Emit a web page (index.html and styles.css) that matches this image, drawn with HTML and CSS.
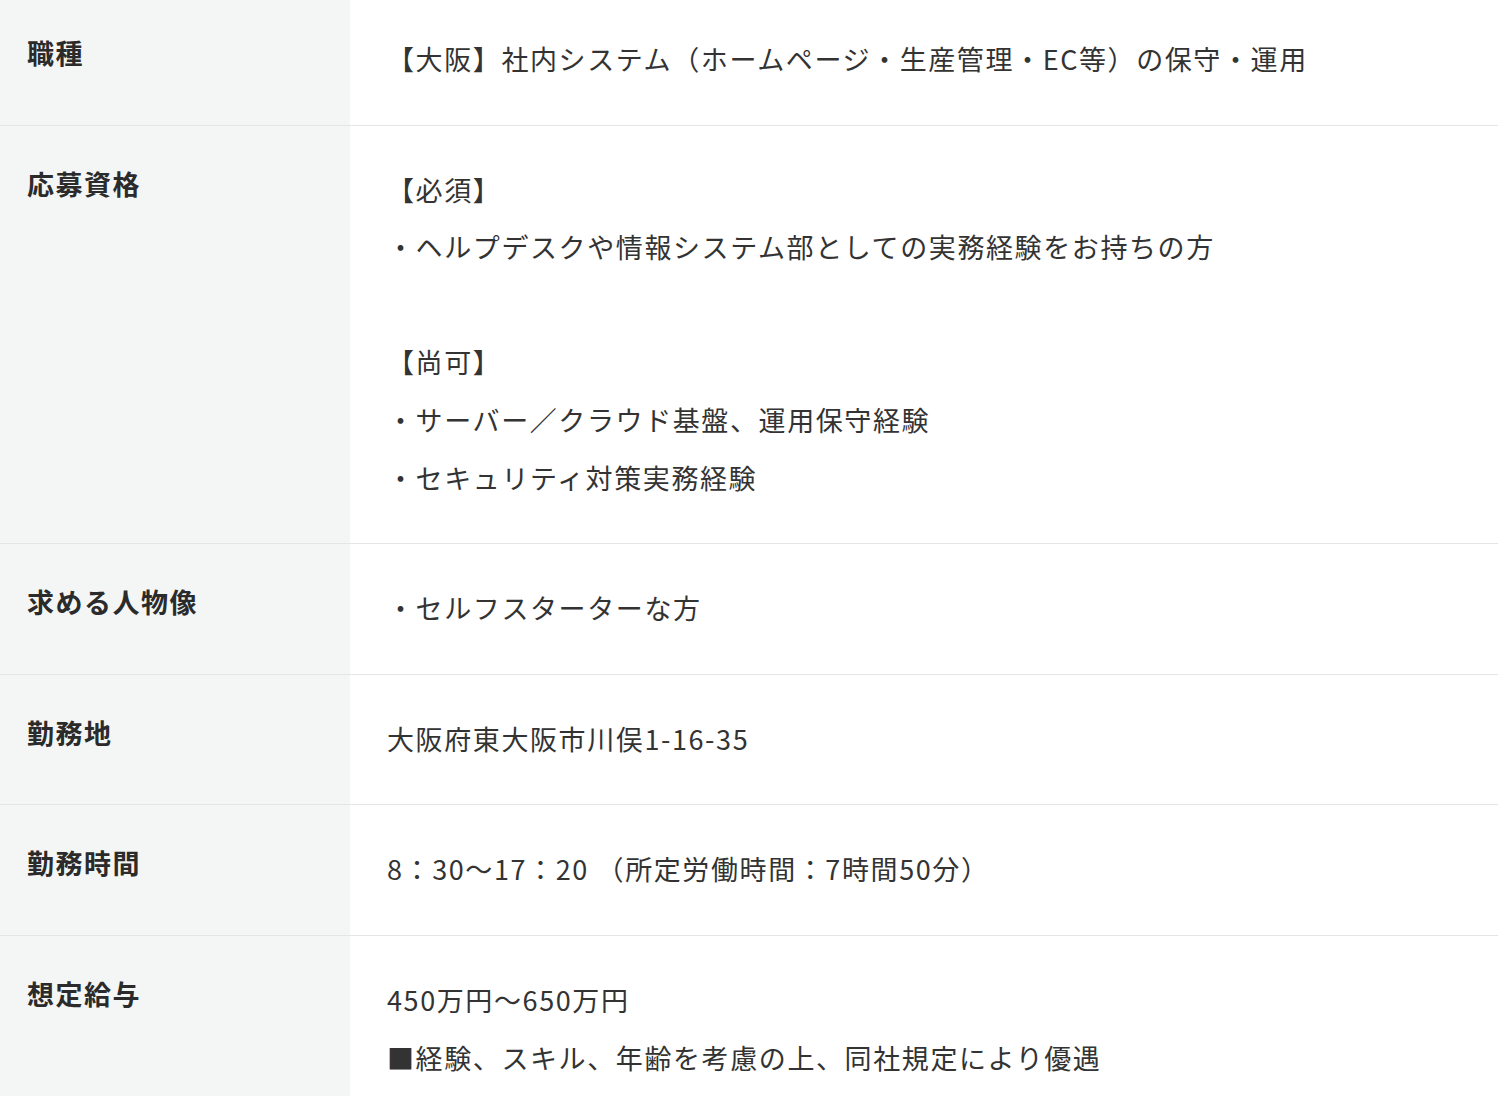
FILE: index.html
```html
<!DOCTYPE html>
<html lang="ja">
<head>
<meta charset="utf-8">
<title>募集要項</title>
<link rel="stylesheet" href="styles.css">
</head>
<body>
<div class="spec">
  <div class="row">
    <div class="label">職種</div>
    <div class="value">【大阪】社内システム（ホームページ・生産管理・EC等）の保守・運用</div>
  </div>
  <div class="row">
    <div class="label">応募資格</div>
    <div class="value">【必須】<br>・ヘルプデスクや情報システム部としての実務経験をお持ちの方<br><br>【尚可】<br>・サーバー／クラウド基盤、運用保守経験<br>・セキュリティ対策実務経験</div>
  </div>
  <div class="row">
    <div class="label">求める人物像</div>
    <div class="value">・セルフスターターな方</div>
  </div>
  <div class="row">
    <div class="label">勤務地</div>
    <div class="value">大阪府東大阪市川俣1-16-35</div>
  </div>
  <div class="row">
    <div class="label">勤務時間</div>
    <div class="value">8：30〜17：20 （所定労働時間：7時間50分）</div>
  </div>
  <div class="row">
    <div class="label">想定給与</div>
    <div class="value">450万円〜650万円<br>■経験、スキル、年齢を考慮の上、同社規定により優遇</div>
  </div>
</div>
</body>
</html>
```

FILE: styles.css
```css
html, body {
  margin: 0;
  padding: 0;
  background: #ffffff;
}

body {
  font-family: "Noto Sans CJK JP", "Noto Sans", sans-serif;
  color: #333333;
}

.spec {
  margin-top: -5px;
}

.row {
  display: grid;
  grid-template-columns: 350px 1fr;
  border-bottom: 1px solid #e5e5e5;
}

.label {
  background: #f4f5f5;
  padding: 35px 20px 0 27px;
  font-size: 27px;
  font-weight: 700;
  line-height: 45px;
  letter-spacing: 1.5px;
  color: #2b2b2b;
}

.value {
  padding: 35px 40px 37px 37px;
  font-size: 27px;
  line-height: 57.6px;
  letter-spacing: 1.6px;
  color: #333333;
}
```
